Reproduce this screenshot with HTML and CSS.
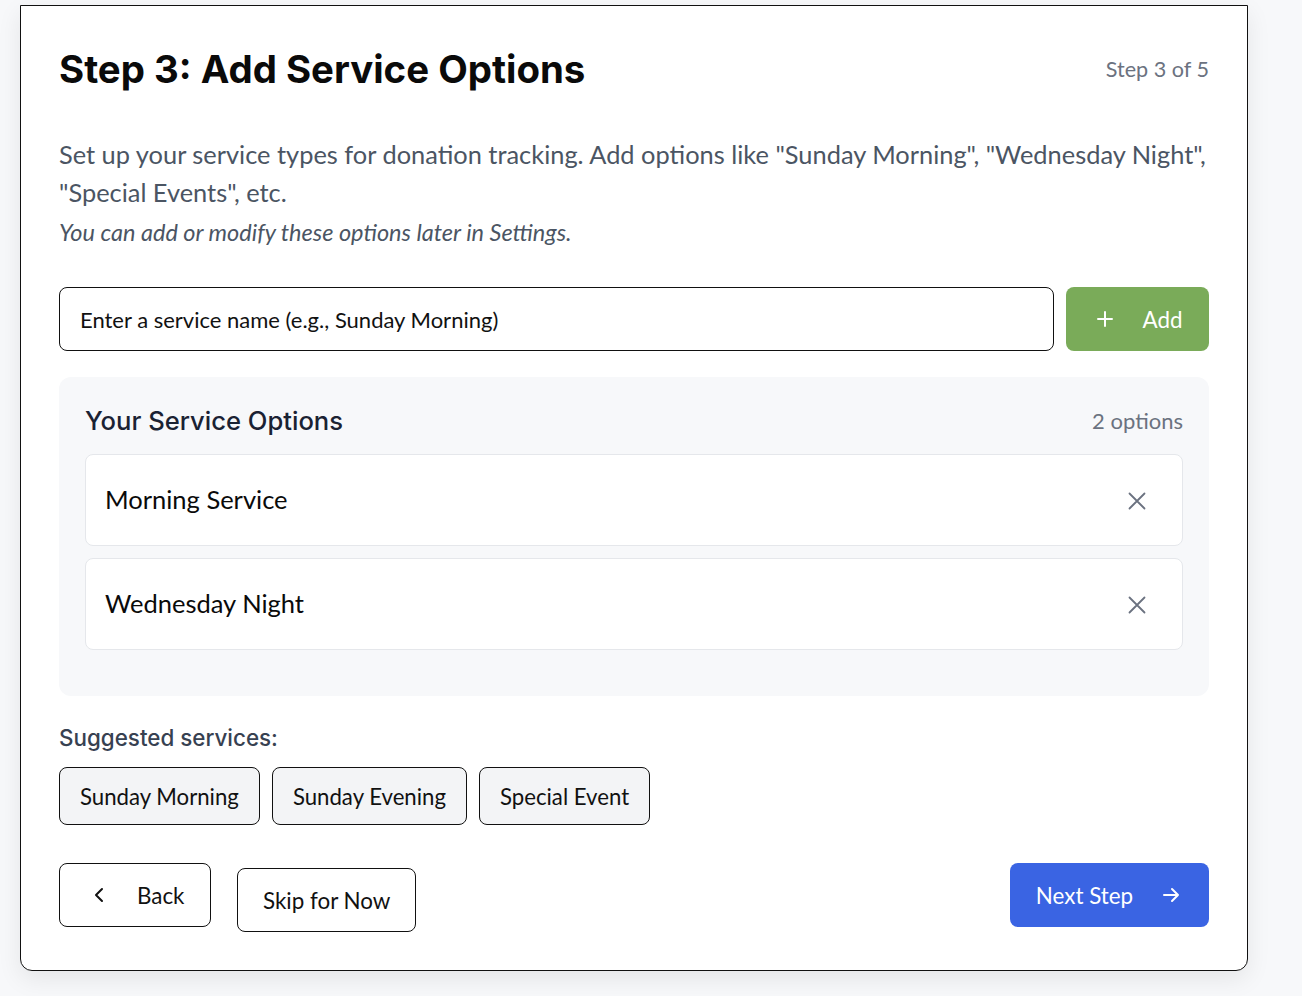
FILE: index.html
```html
<!DOCTYPE html>
<html lang="en">
<head>
<meta charset="utf-8">
<title>Step 3: Add Service Options</title>
<link rel="stylesheet" href="styles.css">
</head>
<body>
<div class="page">
  <section class="card">
    <header class="card-head">
      <h1 class="title">Step 3: Add Service Options</h1>
      <span class="step-count">Step 3 of 5</span>
    </header>

    <p class="desc">Set up your service types for donation tracking. Add options like "Sunday Morning", "Wednesday Night", "Special Events", etc.</p>
    <p class="note">You can add or modify these options later in Settings.</p>

    <div class="add-row">
      <div class="input">Enter a service name (e.g., Sunday Morning)</div>
      <button class="btn-add" type="button">
        <svg class="ico" width="24" height="24" viewBox="0 0 24 24" fill="none" stroke="currentColor" stroke-width="2" stroke-linecap="round"><path d="M12 5v14M5 12h14"/></svg>
        <span>Add</span>
      </button>
    </div>

    <div class="options">
      <div class="options-head">
        <h2 class="options-title">Your Service Options</h2>
        <span class="options-count">2 options</span>
      </div>
      <div class="option-list">
        <div class="option">
          <span>Morning Service</span>
          <svg class="x" width="18" height="18" viewBox="0 0 18 18" fill="none" stroke="currentColor" stroke-width="1.8" stroke-linecap="round"><path d="M1.5 1.5l15 15M16.5 1.5l-15 15"/></svg>
        </div>
        <div class="option">
          <span>Wednesday Night</span>
          <svg class="x" width="18" height="18" viewBox="0 0 18 18" fill="none" stroke="currentColor" stroke-width="1.8" stroke-linecap="round"><path d="M1.5 1.5l15 15M16.5 1.5l-15 15"/></svg>
        </div>
      </div>
    </div>

    <div class="suggest-label">Suggested services:</div>
    <div class="chips">
      <button class="chip" type="button">Sunday Morning</button>
      <button class="chip" type="button">Sunday Evening</button>
      <button class="chip" type="button">Special Event</button>
    </div>

    <footer class="actions">
      <div class="actions-left">
        <button class="btn-outline btn-back" type="button">
          <svg class="ico" width="24" height="24" viewBox="0 0 24 24" fill="none" stroke="currentColor" stroke-width="2" stroke-linecap="round" stroke-linejoin="round"><path d="M15 18l-6-6 6-6"/></svg>
          <span>Back</span>
        </button>
        <button class="btn-outline btn-skip" type="button">Skip for Now</button>
      </div>
      <button class="btn-next" type="button">
        <span>Next Step</span>
        <svg class="ico" width="24" height="24" viewBox="0 0 24 24" fill="none" stroke="currentColor" stroke-width="2" stroke-linecap="round" stroke-linejoin="round"><path d="M5 12h14M13 6l6 6-6 6"/></svg>
      </button>
    </footer>
  </section>
</div>
</body>
</html>
```

FILE: styles.css
```css
* { box-sizing: border-box; }

html, body {
  margin: 0;
  height: 100%;
}

body {
  background: #f7f8fa;
  font-family: "Lato", "Liberation Sans", sans-serif;
  color: #111;
  overflow: hidden;
}

.page {
  padding: 5px 0 0 20px;
}

.card {
  width: 1228px;
  background: #fff;
  border: 1px solid #111;
  border-radius: 0 0 12px 12px;
  padding: 38px;
  box-shadow: 0 8px 24px rgba(0, 0, 0, 0.08);
}

.card-head {
  display: flex;
  justify-content: space-between;
  align-items: center;
  height: 50px;
  margin-bottom: 41px;
}

.title {
  margin: 0;
  font-family: "Inter", sans-serif;
  font-weight: 700;
  font-size: 38.4px;
  line-height: 50px;
  color: #0a0a0a;
}

.step-count {
  font-size: 21.6px;
  color: #6b7280;
}

.desc {
  margin: 0;
  font-size: 25.4px;
  line-height: 38px;
  color: #4b5563;
}

.note {
  margin: 6px 0 0;
  font-size: 23.5px;
  line-height: 30px;
  font-style: italic;
  color: #4b5563;
}

.add-row {
  display: flex;
  gap: 12px;
  margin-top: 40px;
}

.input {
  flex: 1;
  height: 64px;
  border: 1px solid #111;
  border-radius: 8px;
  padding: 0 20px;
  display: flex;
  align-items: center;
  font-size: 22px;
  color: #111;
}

.btn-add {
  height: 64px;
  width: 143px;
  border: none;
  border-radius: 8px;
  background: #7aab59;
  color: #fff;
  font-family: "Lato", sans-serif;
  font-size: 22.4px;
  display: flex;
  align-items: center;
  justify-content: center;
  gap: 26px;
  padding: 0;
}

.ico { display: block; }

.options {
  margin-top: 26px;
  background: #f7f8fa;
  border-radius: 12px;
  padding: 25px 26px 46px;
}

.options-head {
  display: flex;
  justify-content: space-between;
  align-items: center;
  height: 36px;
}

.options-title {
  margin: 0;
  font-family: "Inter", sans-serif;
  font-weight: 500;
  font-size: 25.6px;
  color: #1a2233;
}

.options-count {
  font-size: 22px;
  color: #6b7280;
}

.option-list {
  margin-top: 16px;
  display: flex;
  flex-direction: column;
  gap: 12px;
}

.option {
  height: 92px;
  background: #fff;
  border: 1px solid #e5e7eb;
  border-radius: 8px;
  padding: 2px 36px 0 19px;
  display: flex;
  align-items: center;
  justify-content: space-between;
  font-size: 25.5px;
  color: #0a0a0a;
}

.option span { margin-top: -4px; }

.x { color: #6b7280; display: block; }

.suggest-label {
  margin-top: 27px;
  font-family: "Inter", sans-serif;
  font-weight: 500;
  font-size: 22.4px;
  line-height: 30px;
  color: #374151;
}

.chips {
  display: flex;
  gap: 12px;
  margin-top: 14px;
}

.chip {
  height: 58px;
  padding: 0 20px;
  background: #f3f4f6;
  border: 1px solid #111;
  border-radius: 8px;
  font-family: "Lato", sans-serif;
  font-size: 22.2px;
  color: #111;
}

.actions {
  margin-top: 38px;
  display: flex;
  justify-content: space-between;
  align-items: flex-start;
}

.actions-left {
  display: flex;
  gap: 26px;
  align-items: flex-start;
}

.btn-outline {
  height: 64px;
  background: #fff;
  border: 1px solid #111;
  border-radius: 8px;
  font-family: "Lato", sans-serif;
  font-size: 22.4px;
  color: #111;
  display: flex;
  align-items: center;
}

.btn-back {
  width: 152px;
  padding: 0 0 0 27px;
  gap: 26px;
}

.btn-skip {
  margin-top: 5px;
  padding: 0 25px;
}

.btn-next {
  height: 64px;
  width: 199px;
  border: none;
  border-radius: 8px;
  background: #3a64e3;
  color: #fff;
  font-family: "Lato", sans-serif;
  font-size: 22.4px;
  display: flex;
  align-items: center;
  justify-content: center;
  gap: 26px;
  padding: 0;
}
```
